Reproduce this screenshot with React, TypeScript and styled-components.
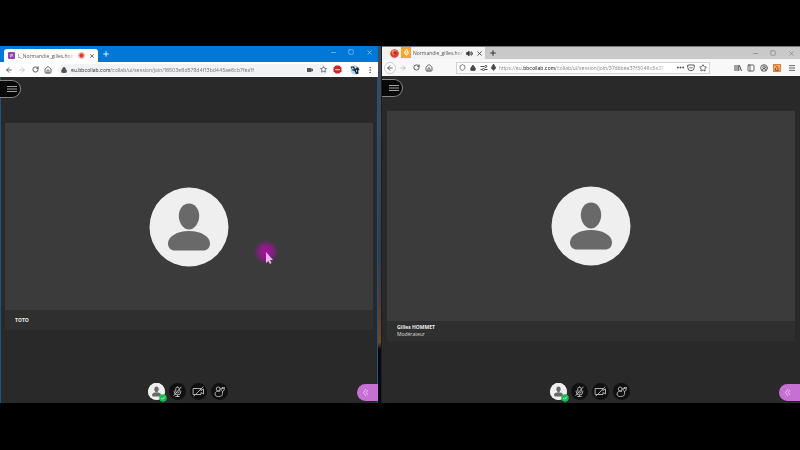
import React from "react";
import styled, { createGlobalStyle, css } from "styled-components";
import {
  ArrowLeft,
  ArrowRight,
  RotateCw,
  House,
  Lock,
  Star,
  Shield,
  Mic,
  Volume2,
  X,
  Plus,
  Minus,
  Square,
  Menu,
  Ellipsis,
  EllipsisVertical,
  CircleUserRound,
  PanelLeft,
} from "lucide-react";

type Kind = "chrome" | "firefox";

const GlobalStyle = createGlobalStyle`
  *, *::before, *::after { box-sizing: border-box; }
  body { margin: 0; background: #000; font-family: "Open Sans", "Noto Sans", sans-serif; }
  button, input { font: inherit; margin: 0; }
`;

const Desktop = styled.main`
  min-height: 100vh;
  padding: 46px 0 47px;
  display: grid;
  grid-template-columns: minmax(0, 378fr) 4px minmax(0, 418fr);
  background: #000;
`;

const Wallpaper = styled.div`
  border-right: 1px solid #1b1d22;
  background: linear-gradient(
    #414b5c 0%, #39465c 30%, #2f3d50 58%, #4c3c36 72%, #70472a 83%, #050a10 85%, #020a12 100%
  );
`;

const Window = styled.section<{ $kind: Kind }>`
  display: flex;
  flex-direction: column;
  min-width: 0;
  background: #292929;
  ${(p) =>
    p.$kind === "chrome"
      ? css`box-shadow: inset 1px 0 #24507a, inset -1px 0 #24507a;`
      : css`border-top: 1px solid #777;`}
`;

const TitleBar = styled.header<{ $kind: Kind }>`
  display: flex;
  align-items: stretch;
  height: ${(p) => (p.$kind === "chrome" ? 16 : 12)}px;
  padding-left: ${(p) => (p.$kind === "chrome" ? 4 : 0)}px;
  background: ${(p) => (p.$kind === "chrome" ? "#0078d7" : "#c9c9c9")};
  color: ${(p) => (p.$kind === "chrome" ? "#b9dcf8" : "#777")};
`;

const Tab = styled.div<{ $kind: Kind }>`
  display: flex;
  align-items: center;
  color: #444;
  ${(p) =>
    p.$kind === "chrome"
      ? css`
          width: 94px;
          margin-top: 3px;
          padding: 0 2px 0 4px;
          gap: 3px;
          border-radius: 3px 3px 0 0;
          background: #fff;
        `
      : css`
          width: 103px;
          padding: 0 2px 0 8px;
          gap: 2px;
          background: #f3f3f3;
        `}
`;

const TabTitle = styled.span`
  flex: 1;
  min-width: 0;
  overflow: hidden;
  white-space: nowrap;
  font-size: 5px;
  line-height: 8px;
  color: #555;
  mask-image: linear-gradient(90deg, #000 85%, transparent);
`;

const IconButton = styled.button<{ $size?: number; $ring?: boolean; $dim?: boolean }>`
  display: grid;
  place-items: center;
  flex: none;
  width: ${(p) => p.$size ?? 12}px;
  height: ${(p) => p.$size ?? 12}px;
  padding: 0;
  border: ${(p) => (p.$ring ? "1px solid #ccc" : "0")};
  border-radius: 50%;
  background: ${(p) => (p.$ring ? "#fff" : "none")};
  color: inherit;
  opacity: ${(p) => (p.$dim ? 0.35 : 1)};
`;

const MicBadge = styled.span`
  display: grid;
  place-items: center;
  width: 10px;
  height: 11px;
  flex: none;
  align-self: flex-start;
  background: #f9a52c;
  color: #fff;
`;

const NewTab = styled(IconButton)<{ $dark?: boolean }>`
  align-self: center;
  margin: 0 2px;
  color: ${(p) => (p.$dark ? "#333" : "#e2f1fd")};
`;

const WindowButtons = styled.div`
  display: flex;
  gap: 6px;
  margin-left: auto;
  padding-right: 3px;
  height: 12px;
`;

const Toolbar = styled.div<{ $kind: Kind }>`
  display: flex;
  align-items: center;
  color: #484848;
  height: ${(p) => (p.$kind === "chrome" ? 15 : 17)}px;
  padding: ${(p) => (p.$kind === "chrome" ? "0 3px" : "0 0 0 2px")};
  gap: 1px;
  background: ${(p) => (p.$kind === "chrome" ? "#fff" : "#f8f8f8")};
`;

const AddressBar = styled.form<{ $kind: Kind }>`
  display: flex;
  align-items: center;
  flex: 1;
  min-width: 0;
  height: 12px;
  ${(p) =>
    p.$kind === "chrome"
      ? css`
          margin-left: 3px;
          padding: 0 0 0 3px;
          gap: 4px;
          border-radius: 6px;
          background: #f1f3f4;
        `
      : css`
          margin: 0 21px 0 20px;
          padding: 0 0 0 2px;
          gap: 2px;
          border: 1px solid #d2d2d2;
          background: #fff;
        `}
`;

const Address = styled.input<{ $kind: Kind }>`
  flex: 1;
  min-width: 0;
  height: 10px;
  padding: 0;
  border: 0;
  outline: 0;
  font-family: Inter, "Open Sans", sans-serif;
  font-size: 5px;
  line-height: 10px;
  color: transparent;
  background-clip: text;
  -webkit-background-clip: text;
  background-image: ${(p) =>
    p.$kind === "chrome"
      ? "linear-gradient(90deg, #333 40px, #777 40px)"
      : "linear-gradient(90deg, #888 24px, #222 24px, #222 57px, #888 57px, #888 150px, #ccc 168px)"};
`;

const Extensions = styled.div`
  display: flex;
  align-items: center;
  gap: 1px;
`;

const Session = styled.div<{ $kind: Kind }>`
  flex: 1;
  display: flex;
  flex-direction: column;
  padding-top: 3px;
`;

const SessionMenu = styled.button`
  display: grid;
  place-items: center;
  width: 21px;
  height: 18px;
  padding: 0 0 0 4px;
  border: 1px solid #858585;
  border-left: 0;
  border-radius: 0 9px 9px 0;
  background: #080808;
  color: #ccc;
`;

const Stage = styled.figure<{ $kind: Kind }>`
  flex: 1;
  display: grid;
  grid-template: 1fr 20px / 1fr;
  margin: ${(p) => (p.$kind === "chrome" ? "25px 5px 0" : "14px 5px 0")};
  background: #3b3b3b;
`;

const StageAvatar = styled.div`
  grid-area: 1 / 1 / 3 / 2;
  place-self: center;
  z-index: 1;
  display: flex;
`;

const Caption = styled.figcaption`
  grid-area: 2 / 1;
  display: flex;
  flex-direction: column;
  justify-content: center;
  padding-left: 10px;
  font-size: 5px;
  line-height: 7px;
  color: #ddd;
  background: #2f2f2f;
`;

const Name = styled.strong`
  font-weight: 700;
  color: #eee;
`;

const Footer = styled.footer<{ $kind: Kind }>`
  display: grid;
  grid-template-columns: 1fr auto 1fr;
  align-items: end;
  height: ${(p) => (p.$kind === "chrome" ? 73 : 62)}px;
  padding-bottom: 2px;
`;

const Controls = styled.div`
  grid-column: 2;
  display: flex;
  gap: 4px;
  padding: 0 2px 1px 0;
`;

const Control = styled.button<{ $light?: boolean }>`
  position: relative;
  display: grid;
  place-items: center;
  width: 17px;
  height: 17px;
  padding: 0;
  border: 0;
  border-radius: 50%;
  background: ${(p) => (p.$light ? "#f2f2f2" : "#101010")};
  color: #bcbcbc;
`;

const StatusBadge = styled.span`
  position: absolute;
  right: -2px;
  bottom: -2px;
  display: flex;
`;

const PanelToggle = styled.button`
  justify-self: end;
  display: grid;
  place-items: center;
  width: 21px;
  height: 17px;
  padding: 0 4px 0 0;
  border: 0;
  border-radius: 9px 0 0 9px;
  background: #c670d4;
  color: #f1d5f5;
`;

const Pointer = styled.svg`
  position: absolute;
  left: 253px;
  top: 240px;
  z-index: 2;
  pointer-events: none;
`;

const Avatar = ({ size }: { size: number }) => (
  <svg width={size} height={size} viewBox="0 0 80 80" aria-hidden="true">
    <circle cx="40" cy="40" r="39.5" fill="#efefef" />
    <path d="M40 16.500c6 0 10.200 5.500 10.200 12.500S45.500 42.500 40 42.500 29.800 36 29.800 29 34 16.500 40 16.500Z" fill="#696969" />
    <path d="M40 44c12 0 21 5.500 21 12.500 0 4.500-3 7-7 7H26c-4 0-7-2.500-7-7C19 49.500 28 44 40 44Z" fill="#696969" />
  </svg>
);

const MicOff = () => (
  <svg width="13" height="13" viewBox="0 0 26 26" fill="none" stroke="currentColor" strokeWidth="1.800" strokeLinecap="round">
    <rect x="9.500" y="4" width="7" height="12" rx="3.500" />
    <path d="M6.500 12v1.500a6.500 6.500 0 0 0 13 0V12M13 20v3M9.500 23h7M20.500 4 5.500 21" />
  </svg>
);

const CameraOff = () => (
  <svg width="13" height="13" viewBox="0 0 26 26" fill="none" stroke="currentColor" strokeWidth="1.800" strokeLinecap="round" strokeLinejoin="round">
    <path d="M3 7h15v4l5-3v10l-5-3v4H3ZM22 4 4 22" />
  </svg>
);

const RaiseHand = () => (
  <svg width="13" height="13" viewBox="0 0 26 26" fill="none" stroke="currentColor" strokeWidth="1.800" strokeLinecap="round" strokeLinejoin="round">
    <circle cx="10.500" cy="8" r="4" />
    <path d="M13.500 12.500C8 11 4 14 4 18c0 4 3 5 7 5 6 0 8-2 8-6v-4c3-1 4-4 3.500-9l-3 4-.5-4-2.500 5c0 2 .5 3 2.500 4" />
  </svg>
);

const CollabLogo = () => (
  <svg width="7" height="7" viewBox="0 0 14 14" aria-hidden="true">
    <rect width="14" height="14" rx="2" fill="#9343b5" />
    <path d="M4 4h6v5H7l-3 2Z" fill="#cf9be0" />
  </svg>
);

const Recording = () => (
  <svg width="7" height="7" viewBox="0 0 14 14" aria-label="Recording">
    <circle cx="7" cy="7" r="6" fill="none" stroke="#e3a4a0" strokeWidth="2" />
    <circle cx="7" cy="7" r="4.500" fill="#d33b31" />
  </svg>
);

const FirefoxLogo = () => (
  <svg width="9" height="9" viewBox="0 0 18 18" aria-hidden="true">
    <circle cx="9" cy="9" r="8.500" fill="#e0402f" />
    <path d="M3 3c4-3 10-2 12 2-4-2-6-1-7 1 3 0 4 2 3 4-1 3-6 2-7-1Z" fill="#f08a3c" />
    <circle cx="10" cy="8" r="3" fill="#9b2f58" />
  </svg>
);

const AdBlock = () => (
  <svg width="9" height="9" viewBox="0 0 18 18" aria-hidden="true">
    <path d="M5.500 1h7L17 5.500v7L12.500 17h-7L1 12.500v-7Z" fill="#cc2427" />
    <path d="M4 8h10v2.500H4Z" fill="#eeb6b6" />
  </svg>
);

const Profile = () => (
  <svg width="10" height="10" viewBox="0 0 20 20" aria-hidden="true">
    <circle cx="10" cy="10" r="9" fill="#b5d3eb" />
    <path d="M1 3h7l2 5 5-4 4 5-3 2 1 7h-5l-3-6-4-1Z" fill="#182b45" />
    <path d="m4 5 3 1v3H5ZM12 9l2 3-2 2Z" fill="#fff" />
  </svg>
);

const Camera = () => (
  <svg width="8" height="8" viewBox="0 0 16 16" fill="#555" aria-hidden="true">
    <path d="M2 4h9v3l3-2v6l-3-2v3H2Z" />
  </svg>
);

const Permissions = () => (
  <svg width="8" height="8" viewBox="0 0 16 16" fill="none" stroke="currentColor" strokeWidth="2" aria-hidden="true">
    <path d="M1 5h7M1 11h4M10 11h5" />
    <circle cx="11.500" cy="5" r="2" />
    <circle cx="7" cy="11" r="2" />
  </svg>
);

const Library = () => (
  <svg width="8" height="8" viewBox="0 0 16 16" fill="none" stroke="currentColor" strokeWidth="2" aria-hidden="true">
    <path d="M2 2v12M6 2v12M9.500 2v12M11 3l4 11" />
  </svg>
);

const Pocket = () => (
  <svg width="8" height="8" viewBox="0 0 16 16" fill="none" stroke="currentColor" strokeWidth="1.800" aria-hidden="true">
    <path d="M1.500 2h13v5a6.500 6.500 0 0 1-13 0ZM5 6l3 3 3-3" />
  </svg>
);

const OrangeAddon = () => (
  <svg width="8" height="8" viewBox="0 0 16 16" aria-hidden="true">
    <rect x="1" y="1" width="14" height="14" fill="#f3a45a" stroke="#c96f25" strokeWidth="1.500" />
    <path d="m5 3 5 5v5M5 8v5h6" fill="none" stroke="#7b431b" strokeWidth="1.500" />
  </svg>
);

const CheckBadge = () => (
  <svg width="8" height="8" viewBox="0 0 16 16" aria-hidden="true">
    <circle cx="8" cy="8" r="7.500" fill="#17bd50" />
    <path d="m4.500 8 2.500 2.500 4.500-5" fill="none" stroke="#cff5dc" strokeWidth="1.800" />
  </svg>
);

const MenuLines = () => (
  <svg width="10" height="8" viewBox="0 0 10 8" stroke="currentColor" aria-hidden="true">
    <path d="M0 1.500h10M0 4h10M0 6.500h10" strokeWidth="0.800" />
  </svg>
);

const OpenPanelIcon = () => (
  <svg width="7" height="9" viewBox="0 0 14 18" fill="none" stroke="currentColor" strokeWidth="1.500" aria-hidden="true">
    <path d="M8 2 3 9l5 7M12 4 8.500 9l3.500 5" />
  </svg>
);

const Captions = () => (
  <WindowButtons>
    <IconButton aria-label="Minimize"><Minus size={7} strokeWidth={2} /></IconButton>
    <IconButton aria-label="Maximize"><Square size={6} strokeWidth={2} /></IconButton>
    <IconButton aria-label="Close"><X size={7} strokeWidth={2} /></IconButton>
  </WindowButtons>
);

const Navigation = ({ ring }: { ring?: boolean }) => (
  <>
    <IconButton aria-label="Back" $ring={ring}><ArrowLeft size={8} strokeWidth={2.5} /></IconButton>
    <IconButton aria-label="Forward" $dim><ArrowRight size={8} strokeWidth={2.5} /></IconButton>
    <IconButton aria-label="Reload"><RotateCw size={7} strokeWidth={3} /></IconButton>
    <IconButton aria-label="Home"><House size={8} strokeWidth={2.5} /></IconButton>
  </>
);

const CollabSession = ({ kind, name, role }: { kind: Kind; name: string; role?: string }) => (
  <Session $kind={kind}>
    <SessionMenu aria-label="Session menu"><MenuLines /></SessionMenu>
    <Stage $kind={kind}>
      <StageAvatar><Avatar size={80} /></StageAvatar>
      <Caption>
        <Name>{name}</Name>
        {role && <span>{role}</span>}
      </Caption>
    </Stage>
    <Footer $kind={kind}>
      <Controls>
        <Control $light aria-label="My status">
          <Avatar size={17} />
          <StatusBadge><CheckBadge /></StatusBadge>
        </Control>
        <Control aria-label="Microphone"><MicOff /></Control>
        <Control aria-label="Camera"><CameraOff /></Control>
        <Control aria-label="Raise hand"><RaiseHand /></Control>
      </Controls>
      <PanelToggle aria-label="Open panel"><OpenPanelIcon /></PanelToggle>
    </Footer>
  </Session>
);

export default function App() {
  return (
    <>
      <GlobalStyle />
      <Desktop>
        <Window $kind="chrome">
          <TitleBar $kind="chrome">
            <Tab $kind="chrome">
              <CollabLogo />
              <TabTitle>L_Normandie_gilles.homm</TabTitle>
              <Recording />
              <IconButton $size={8} aria-label="Close tab"><X size={6} strokeWidth={3} /></IconButton>
            </Tab>
            <NewTab aria-label="New tab"><Plus size={8} strokeWidth={3} /></NewTab>
            <Captions />
          </TitleBar>
          <Toolbar $kind="chrome">
            <Navigation />
            <AddressBar $kind="chrome">
              <Lock size={6} strokeWidth={3} fill="#555" />
              <Address
                $kind="chrome"
                aria-label="Address"
                defaultValue="eu.bbcollab.com/collab/ui/session/join/16503e6d579d4f13bd445ae6cb7fea1f"
              />
              <Camera />
              <IconButton type="button" $size={10} aria-label="Bookmark"><Star size={7} strokeWidth={2.5} /></IconButton>
            </AddressBar>
            <Extensions>
              <IconButton $size={16} aria-label="Ad blocker"><AdBlock /></IconButton>
              <IconButton $size={18} aria-label="Profile"><Profile /></IconButton>
              <IconButton $size={10} aria-label="More"><EllipsisVertical size={8} strokeWidth={2} /></IconButton>
            </Extensions>
          </Toolbar>
          <CollabSession kind="chrome" name="TOTO" />
        </Window>
        <Wallpaper />
        <Window $kind="firefox">
          <TitleBar $kind="firefox">
            <Tab $kind="firefox">
              <FirefoxLogo />
              <MicBadge><Mic size={7} strokeWidth={3} /></MicBadge>
              <TabTitle>Normandie_gilles.hom</TabTitle>
              <Volume2 size={7} strokeWidth={3} fill="#333" />
              <IconButton $size={8} aria-label="Close tab"><X size={7} strokeWidth={3} /></IconButton>
            </Tab>
            <NewTab $dark aria-label="New tab"><Plus size={8} strokeWidth={3} /></NewTab>
            <Captions />
          </TitleBar>
          <Toolbar $kind="firefox">
            <Navigation ring />
            <AddressBar $kind="firefox">
              <Shield size={7} strokeWidth={2.5} />
              <IconButton type="button" $size={10} aria-label="Site security"><Lock size={6} strokeWidth={3} fill="#444" /></IconButton>
              <Permissions />
              <Mic size={7} strokeWidth={3} fill="#444" />
              <Address
                $kind="firefox"
                aria-label="Address"
                defaultValue="https://eu.bbcollab.com/collab/ui/session/join/37dbbea37f5046c5a31"
              />
              <Ellipsis size={9} strokeWidth={3} />
              <Pocket />
              <IconButton type="button" aria-label="Bookmark"><Star size={8} strokeWidth={2.5} /></IconButton>
            </AddressBar>
            <Extensions>
              <IconButton aria-label="Library"><Library /></IconButton>
              <IconButton aria-label="Sidebar"><PanelLeft size={8} strokeWidth={2.5} /></IconButton>
              <IconButton aria-label="Account"><CircleUserRound size={8} strokeWidth={2.5} /></IconButton>
              <IconButton aria-label="Add-on"><OrangeAddon /></IconButton>
              <IconButton $size={16} aria-label="Menu"><Menu size={8} strokeWidth={2.5} /></IconButton>
            </Extensions>
          </Toolbar>
          <CollabSession kind="firefox" name="Gilles HOMMET" role="Modérateur" />
        </Window>
      </Desktop>
      <Pointer width="26" height="26" viewBox="0 0 26 26" aria-hidden="true">
        <defs>
          <radialGradient id="halo">
            <stop offset="0" stopColor="#a3149c" />
            <stop offset="0.500" stopColor="#8c1b87" />
            <stop offset="1" stopColor="#8c1b87" stopOpacity="0" />
          </radialGradient>
        </defs>
        <circle cx="13" cy="12" r="12" fill="url(#halo)" />
        <path d="M13 12v11l2.500-2 1.500 3 1.500-1-1.500-3h3Z" fill="#f3b5ef" />
      </Pointer>
    </>
  );
}
